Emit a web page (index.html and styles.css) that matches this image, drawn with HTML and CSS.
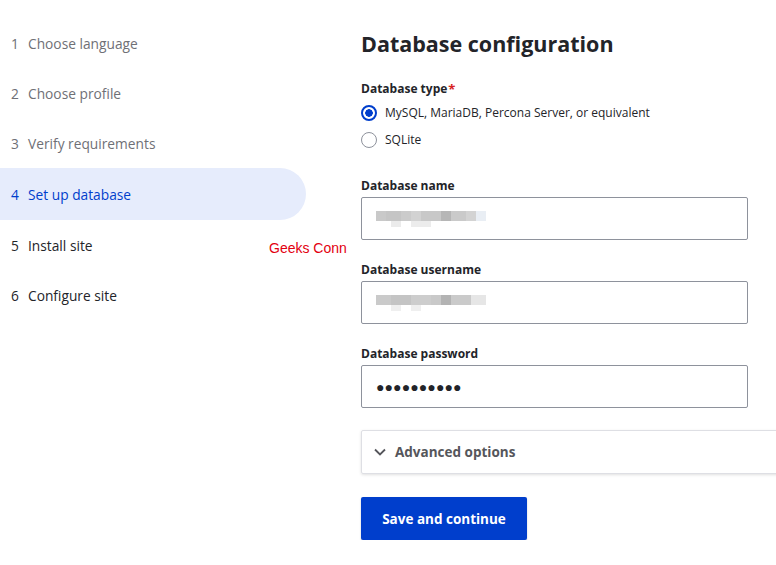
FILE: index.html
```html
<!DOCTYPE html>
<html lang="en">
<head>
  <meta charset="UTF-8" />
  <meta name="viewport" content="width=device-width, initial-scale=1.0"/>
  <title>Set up database</title>
  <link rel="stylesheet" href="styles.css">
</head>
<body>

  <div class="page">
    <ol class="steps">
      <li class="step done"><span class="num">1</span>Choose language</li>
      <li class="step done"><span class="num">2</span>Choose profile</li>
      <li class="step done"><span class="num">3</span>Verify requirements</li>
      <li class="step active"><span class="num">4</span>Set up database</li>
      <li class="step"><span class="num">5</span>Install site</li>
      <li class="step"><span class="num">6</span>Configure site</li>
    </ol>

    <div class="watermark">Geeks Conn</div>

    <form class="main">
      <h1>Database configuration</h1>

      <div class="field-type">
        <div class="label">Database type<span class="req">*</span></div>
        <label class="radio"><span class="dot checked"></span>MySQL, MariaDB, Percona Server, or equivalent</label>
        <label class="radio"><span class="dot"></span>SQLite</label>
      </div>

      <div class="field first">
        <div class="label">Database name</div>
        <div class="input"><span class="blur blur-a"></span></div>
      </div>

      <div class="field">
        <div class="label">Database username</div>
        <div class="input"><span class="blur blur-b"></span></div>
      </div>

      <div class="field">
        <div class="label">Database password</div>
        <div class="input pass">●●●●●●●●●●</div>
      </div>

      <div class="details">
        <svg class="chev" width="12" height="8" viewBox="0 0 12 8"><polyline points="1,1.5 6,6.5 11,1.5" fill="none" stroke="#55565b" stroke-width="1.8"/></svg>
        Advanced options
      </div>

      <div class="button">Save and continue</div>
    </form>
  </div>

</body>
</html>
```

FILE: styles.css
```css
body { margin: 0; font-family: "Open Sans", Arial, sans-serif; color: #232429; background: #fff; overflow: hidden; }
.page { display: flex; position: relative; }

.steps { list-style: none; margin: 0; padding: 18px 0 0; width: 306px; flex: none; font-size: 13.75px; }
.step { height: 50px; display: flex; align-items: center; padding-left: 11px; color: #232429; }
.step .num { width: 17px; }
.step.done { color: #6f7076; }
.step.active { height: 52px; color: #003ecc; background: #e6ecfc; border-radius: 0 26px 26px 0; }

.watermark { position: absolute; left: 269px; top: 240px; color: #e3000f; font-family: "Liberation Sans", Arial, sans-serif; font-size: 14px; }

.main { margin-left: 55px; padding-top: 30px; font-size: 12px; }
h1 { margin: 0; font-size: 21.5px; line-height: 28px; font-weight: 700; color: #232429; }

.label { font-weight: 700; line-height: 18px; font-size: 12px; }
.req { color: #d72222; font-size: 13px; margin-left: 1px; position: relative; top: 1px; }

.field-type { margin-top: 21px; }
.radio { display: flex; align-items: center; height: 27px; }
.field-type .label { margin-bottom: 1px; }
.dot { width: 16px; height: 16px; box-sizing: border-box; border: 1px solid #8e929c; border-radius: 50%; margin-right: 8px; }
.dot.checked { border: 2px solid #003ecc; background: radial-gradient(circle, #003ecc 0 3.5px, #fff 4px); }

.field { margin-top: 21px; }
.field.first { margin-top: 24px; }
.field .label { margin-bottom: 2px; }
.input { width: 387px; height: 43px; box-sizing: border-box; border: 1px solid #8e929c; border-radius: 2px; display: flex; align-items: center; padding-left: 14px; }
.pass { font-size: 14px; letter-spacing: 0.1px; color: #232429; }

.blur { display: block; width: 110px; height: 16px; }
.blur-a { background:
  linear-gradient(to right, #fff 0 15px, #ebebeb 15px 25px, #fff 25px 35px, #ececec 35px 55px, #fff 55px) 0 10px / 110px 6px no-repeat,
  linear-gradient(to right, #c9c9c9 0 10px, #c5c5c5 10px 25px, #cbcbcb 25px 35px, #d2d2d2 35px 45px, #c8c8c8 45px 65px, #b6b6b6 65px 75px, #cacaca 75px 90px, #d3d3d3 90px 100px, #e9eef4 100px 110px) 0 0 / 110px 10px no-repeat; }
.blur-b { background:
  linear-gradient(to right, #fff 0 15px, #efefef 15px 25px, #fff 25px 35px, #efefef 35px 45px, #fff 45px) 0 10px / 110px 6px no-repeat,
  linear-gradient(to right, #cacaca 0 15px, #c4c4c4 15px 35px, #cdcdcd 35px 55px, #c9c9c9 55px 65px, #b3b3b3 65px 75px, #cacaca 75px 95px, #e6e6e6 95px 110px) 0 0 / 110px 10px no-repeat; }

.details { margin-top: 22px; width: 440px; height: 44px; box-sizing: border-box; border: 1px solid #dedfe4; border-radius: 2px; box-shadow: 0 1px 3px rgba(0,0,0,0.12); display: flex; align-items: center; padding-left: 12px; font-weight: 700; font-size: 13.5px; color: #55565b; }
.chev { margin-right: 9px; }

.button { margin-top: 23px; display: inline-flex; align-items: center; justify-content: center; width: 166px; height: 43px; background: #003ecc; color: #fff; font-weight: 700; font-size: 13.5px; border-radius: 2px; box-shadow: 0 1px 2px rgba(0,0,0,0.2); }
```
